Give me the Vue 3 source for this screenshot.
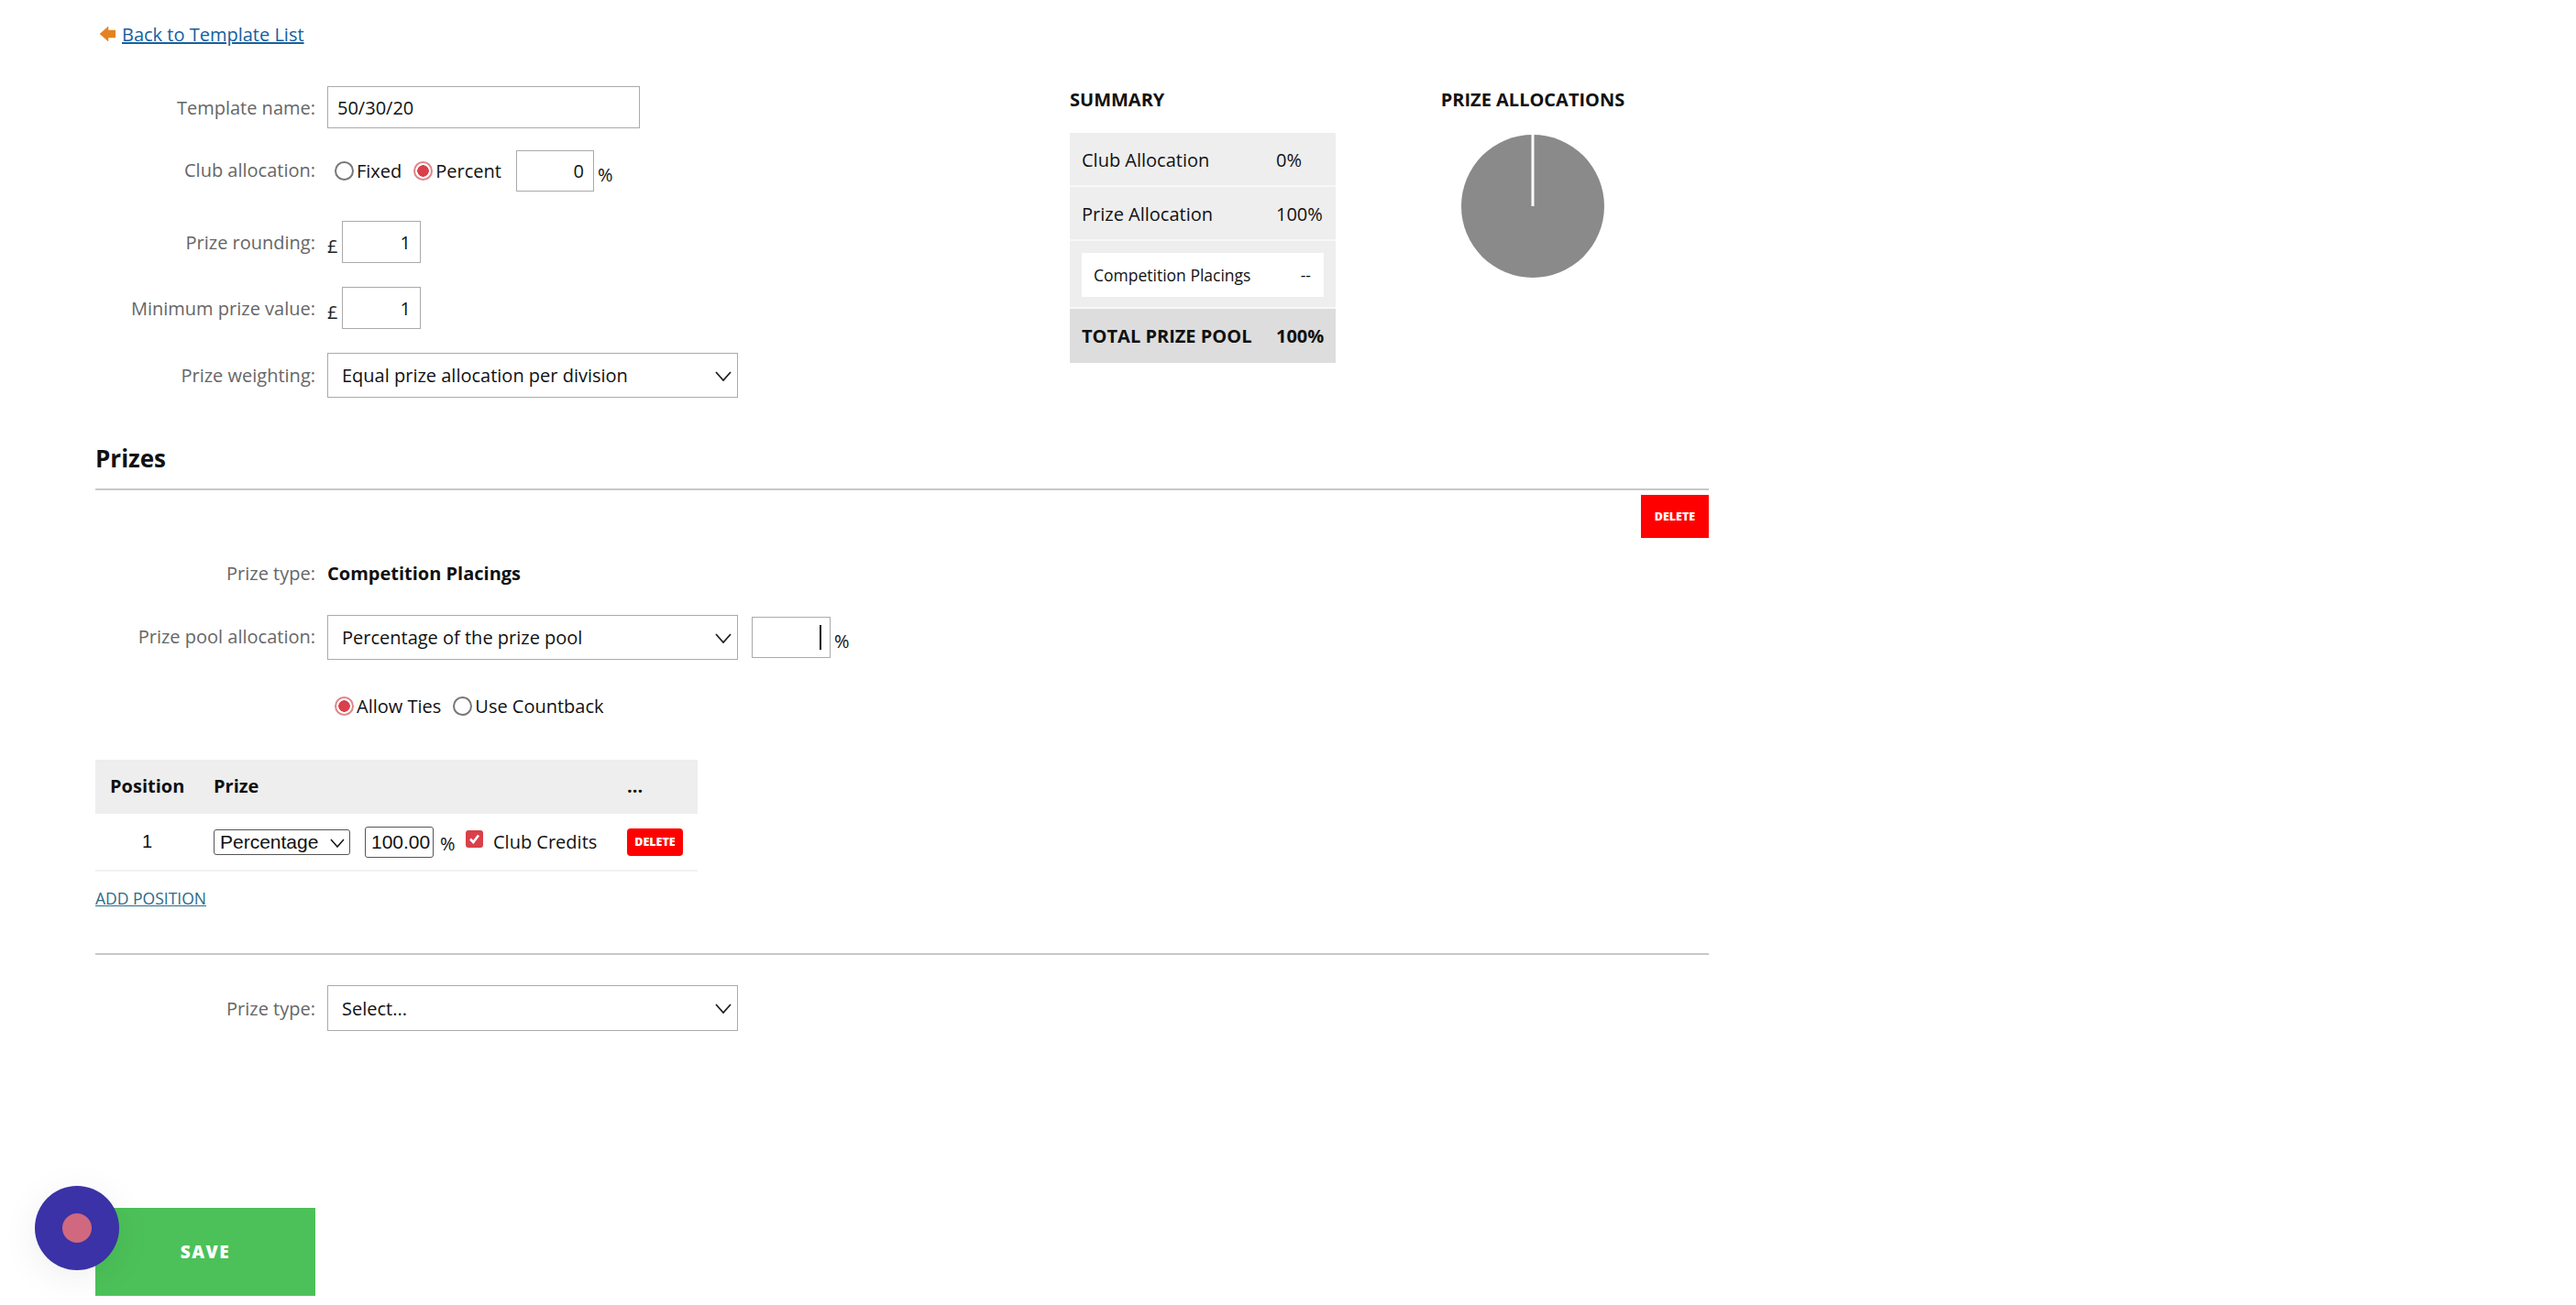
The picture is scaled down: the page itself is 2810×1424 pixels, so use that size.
<script setup>
import { ref } from 'vue'

const templateName = ref('50/30/20')
const clubMode = ref('percent')
const clubValue = ref('0')
const rounding = ref('1')
const minPrize = ref('1')
const tieMode = ref('ties')
const clubCredits = ref(true)

const summaryRows = [
  { label: 'Club Allocation', value: '0%' },
  { label: 'Prize Allocation', value: '100%' }
]
</script>

<template>
  <div class="page">
    <div class="back-row">
      <svg class="back-arrow" width="17" height="16" viewBox="0 0 17 16">
        <path d="M0 8 L9 0 L9 4 L17 4 L17 12 L9 12 L9 16 Z" fill="#e5821f" stroke="#e5821f" stroke-width="0.5" stroke-linejoin="round" />
      </svg>
      <a class="back-link" href="#">Back to Template List</a>
    </div>

    <div class="top">
      <div class="form">
        <div class="row">
          <label class="label">Template name:</label>
          <input v-model="templateName" class="text-input name-input" type="text" />
        </div>
        <div class="row row-club">
          <label class="label label-raised">Club allocation:</label>
          <div class="radios club-radios">
            <label class="radio"><input v-model="clubMode" type="radio" value="fixed" />Fixed</label>
            <label class="radio"><input v-model="clubMode" type="radio" value="percent" />Percent</label>
          </div>
          <input v-model="clubValue" class="text-input num-input club-input" type="text" />
          <span class="unit percent">%</span>
        </div>
        <div class="row row-rounding">
          <label class="label">Prize rounding:</label>
          <span class="unit pound">£</span>
          <input v-model="rounding" class="text-input num-input" type="text" />
        </div>
        <div class="row row-min">
          <label class="label">Minimum prize value:</label>
          <span class="unit pound">£</span>
          <input v-model="minPrize" class="text-input num-input" type="text" />
        </div>
        <div class="row row-min">
          <label class="label">Prize weighting:</label>
          <div class="select-wrap">
            <select class="select">
              <option>Equal prize allocation per division</option>
            </select>
            <svg class="chevron" width="18" height="11" viewBox="0 0 18 11">
              <path d="M1 1 L9 10 L17 1" fill="none" stroke="#222" stroke-width="1.8" />
            </svg>
          </div>
        </div>
      </div>

      <div class="summary">
        <h3 class="side-title">SUMMARY</h3>
        <div class="summary-box">
          <div v-for="item in summaryRows" :key="item.label" class="summary-row">
            <span class="summary-label">{{ item.label }}</span>
            <span>{{ item.value }}</span>
          </div>
          <div class="summary-nested">
            <div class="nested-card">
              <span>Competition Placings</span>
              <span>--</span>
            </div>
          </div>
          <div class="summary-row summary-total">
            <span class="summary-label">TOTAL PRIZE POOL</span>
            <span>100%</span>
          </div>
        </div>
      </div>

      <div class="allocations">
        <h3 class="side-title">PRIZE ALLOCATIONS</h3>
        <svg class="pie" width="156" height="156" viewBox="0 0 156 156">
          <circle cx="78" cy="78" r="78" fill="#8a8a8a" />
          <rect x="76.5" y="0" width="3" height="78" fill="#fff" />
        </svg>
      </div>
    </div>

    <h2 class="section-title">Prizes</h2>
    <div class="delete-row">
      <button class="delete-btn">DELETE</button>
    </div>

    <div class="row row-type">
      <label class="label">Prize type:</label>
      <strong class="type-name">Competition Placings</strong>
    </div>
    <div class="row row-pool">
      <label class="label label-raised">Prize pool allocation:</label>
      <div class="select-wrap">
        <select class="select">
          <option>Percentage of the prize pool</option>
        </select>
        <svg class="chevron" width="18" height="11" viewBox="0 0 18 11">
          <path d="M1 1 L9 10 L17 1" fill="none" stroke="#222" stroke-width="1.8" />
        </svg>
      </div>
      <div class="pool-input">
        <input class="text-input num-input" type="text" />
        <span class="caret"></span>
      </div>
      <span class="unit percent">%</span>
    </div>
    <div class="row row-ties">
      <span class="label"></span>
      <div class="radios ties-radios">
        <label class="radio"><input v-model="tieMode" type="radio" value="ties" />Allow Ties</label>
        <label class="radio"><input v-model="tieMode" type="radio" value="countback" />Use Countback</label>
      </div>
    </div>

    <table class="positions">
      <thead>
        <tr>
          <th class="col-position">Position</th>
          <th class="col-prize">Prize</th>
          <th class="col-more">...</th>
        </tr>
      </thead>
      <tbody>
        <tr>
          <td class="cell-position">1</td>
          <td>
            <div class="prize-cell">
              <div class="mini-select-wrap">
                <select class="mini-select">
                  <option>Percentage</option>
                </select>
                <svg class="mini-chevron" width="16" height="10" viewBox="0 0 16 10">
                  <path d="M1 1 L8 9 L15 1" fill="none" stroke="#111" stroke-width="1.5" />
                </svg>
              </div>
              <input class="mini-input" type="text" value="100.00" />
              <span class="mini-unit">%</span>
              <div class="credits-box">
                <input v-model="clubCredits" class="credits-check" type="checkbox" />
                <svg class="credits-tick" width="19" height="19" viewBox="0 0 19 19">
                  <path d="M5 9.5 L8.3 13 L14 5.5" fill="none" stroke="#fff" stroke-width="2.6" />
                </svg>
              </div>
              <span class="credits-label">Club Credits</span>
            </div>
          </td>
          <td>
            <button class="delete-btn delete-small">DELETE</button>
          </td>
        </tr>
      </tbody>
    </table>

    <a class="add-position" href="#">ADD POSITION</a>
    <hr class="divider" />

    <div class="row row-select-type">
      <label class="label">Prize type:</label>
      <div class="select-wrap">
        <select class="select select-tall">
          <option>Select...</option>
        </select>
        <svg class="chevron" width="18" height="11" viewBox="0 0 18 11">
          <path d="M1 1 L9 10 L17 1" fill="none" stroke="#222" stroke-width="1.8" />
        </svg>
      </div>
    </div>

    <button class="save-btn">SAVE</button>

    <div class="floating-widget">
      <span class="floating-dot"></span>
    </div>
  </div>
</template>

<style scoped>
.page {
  box-sizing: border-box;
  width: 1864px;
  height: 1424px;
  padding: 22px 0 0 104px;
  font-family: "Open Sans", "Liberation Sans", sans-serif;
  font-size: 20px;
  color: #111;
  overflow: hidden;
}

.back-row {
  display: flex;
  align-items: center;
  height: 30px;
  padding-left: 5px;
}

.back-arrow {
  margin-right: 7px;
}

.back-link {
  color: #14609f;
  text-decoration: underline;
}

.top {
  display: flex;
  margin-top: 42px;
}

.form {
  width: 1063px;
  flex-shrink: 0;
}

.row {
  display: flex;
  align-items: center;
}

.row-club {
  margin-top: 24px;
}

.row-rounding {
  margin-top: 32px;
}

.row-min {
  margin-top: 26px;
}

.label {
  width: 240px;
  margin-right: 13px;
  text-align: right;
  color: #666;
  flex-shrink: 0;
}

.label-raised {
  margin-bottom: 3px;
}

.text-input {
  box-sizing: border-box;
  height: 46px;
  border: 1px solid #aaa;
  background: #fff;
  padding: 0 10px;
  font: inherit;
  color: #111;
  outline: none;
}

.name-input {
  width: 341px;
}

.num-input {
  width: 86px;
  text-align: right;
  padding-right: 10px;
}

.radios {
  display: flex;
}

.radio {
  display: flex;
  align-items: center;
  color: #111;
}

.radio input {
  appearance: none;
  box-sizing: border-box;
  width: 21px;
  height: 21px;
  margin: 0 3px 0 0;
  border: 2px solid #777;
  border-radius: 50%;
  background: #fff;
}

.radio input:checked {
  border-color: #e0858b;
  background: radial-gradient(circle, #d9404a 0 6px, #fff 6.5px);
}

.club-radios {
  margin-left: 8px;
  gap: 13px;
}

.club-input {
  margin-left: 16px;
  width: 85px;
  height: 45px;
}

.unit {
  margin-top: 8px;
}

.percent {
  margin-left: 4px;
}

.pound {
  width: 16px;
  color: #222;
}

.select-wrap {
  position: relative;
  width: 448px;
}

.select {
  display: block;
  box-sizing: border-box;
  appearance: none;
  width: 100%;
  height: 49px;
  border: 1px solid #aaa;
  border-radius: 0;
  background: #fff;
  padding: 0 15px;
  font: inherit;
  color: #111;
}

.select-tall {
  height: 50px;
}

.chevron {
  position: absolute;
  right: 7px;
  top: 20px;
  pointer-events: none;
}

.summary {
  width: 290px;
  flex-shrink: 0;
}

.side-title {
  margin: 0;
  font-size: 20px;
  line-height: 30px;
  font-weight: 700;
  color: #111;
  white-space: nowrap;
}

.summary-box {
  margin-top: 21px;
  background: #eee;
}

.summary-row {
  box-sizing: border-box;
  display: flex;
  align-items: center;
  height: 59px;
  padding: 2px 0 0 13px;
  border-bottom: 2px solid #f8f8f8;
}

.summary-label {
  width: 212px;
}

.summary-nested {
  padding: 13px 13px 11px;
  border-bottom: 2px solid #f8f8f8;
}

.nested-card {
  display: flex;
  justify-content: space-between;
  align-items: center;
  height: 48px;
  padding: 0 14px 0 13px;
  background: #fff;
  font-size: 17.5px;
}

.summary-total {
  height: 59px;
  padding-top: 0;
  background: #ddd;
  border-bottom: 0;
  font-weight: 700;
}

.allocations {
  width: 200px;
  margin-left: 115px;
  flex-shrink: 0;
  display: flex;
  flex-direction: column;
  align-items: center;
}

.pie {
  margin-top: 23px;
}

.section-title {
  box-sizing: content-box;
  margin: 50px 0 0;
  width: 1760px;
  height: 32px;
  padding-bottom: 17px;
  border-bottom: 2px solid #c8c8c8;
  font-size: 26px;
  line-height: 32px;
  font-weight: 700;
}

.delete-row {
  display: flex;
  justify-content: flex-end;
  width: 1760px;
  margin-top: 5px;
}

.delete-btn {
  width: 74px;
  height: 47px;
  border: 0;
  padding: 0;
  background: #f00;
  color: #fff;
  font-family: inherit;
  font-size: 12.5px;
  font-weight: 800;
}

.row-type {
  height: 30px;
  margin-top: 23px;
}

.type-name {
  font-weight: 700;
}

.row-pool {
  margin-top: 31px;
}

.pool-input {
  position: relative;
  margin-left: 15px;
  height: 45px;
}

.pool-input .text-input {
  height: 45px;
}

.caret {
  position: absolute;
  left: 74px;
  top: 9px;
  width: 2px;
  height: 27px;
  background: #111;
}

.row-ties {
  height: 30px;
  margin-top: 35px;
}

.ties-radios {
  margin-left: 8px;
  gap: 13px;
}

.positions {
  width: 657px;
  margin-top: 44px;
  border-collapse: collapse;
  table-layout: fixed;
}

.positions th {
  height: 57px;
  padding: 0 0 2px;
  background: #eee;
  text-align: left;
  font-weight: 700;
}

.col-position {
  width: 129px;
  box-sizing: border-box;
  padding-left: 16px !important;
}

.col-more {
  width: 77px;
}

.col-prize {
  width: 451px;
}

.positions td {
  height: 61px;
  padding: 0;
  border-bottom: 2px solid #f2f2f2;
}

.positions td.cell-position {
  padding-right: 16px;
  text-align: center;
  font-family: "Liberation Sans", Arial, sans-serif;
}

.prize-cell {
  display: flex;
  align-items: center;
}

.mini-select-wrap {
  position: relative;
  width: 149px;
}

.mini-select {
  display: block;
  box-sizing: border-box;
  appearance: none;
  width: 100%;
  height: 28px;
  border: 1px solid #555;
  border-radius: 3px;
  background: #fff;
  padding: 0 6px;
  font-family: "Liberation Sans", Arial, sans-serif;
  font-size: 21px;
  color: #111;
}

.mini-chevron {
  position: absolute;
  right: 6px;
  top: 10px;
  pointer-events: none;
}

.mini-input {
  box-sizing: border-box;
  width: 75px;
  height: 34px;
  margin-left: 16px;
  border: 1px solid #555;
  border-radius: 3px;
  padding: 0 2px 0 6px;
  font-family: "Liberation Sans", Arial, sans-serif;
  font-size: 21px;
  color: #111;
}

.mini-unit {
  width: 16px;
  margin: 4px 0 0 7px;
}

.credits-box {
  position: relative;
  width: 19px;
  height: 19px;
  margin: -7px 0 0 12px;
}

.credits-check {
  appearance: none;
  display: block;
  width: 19px;
  height: 19px;
  margin: 0;
  border-radius: 3px;
  background: #fff;
}

.credits-check:checked {
  background: #d9404a;
}

.credits-tick {
  position: absolute;
  left: 0;
  top: 0;
  pointer-events: none;
}

.credits-label {
  margin-left: 11px;
  color: #111;
}

.delete-small {
  display: block;
  width: 61px;
  height: 30px;
  border-radius: 4px;
}

.add-position {
  display: block;
  width: fit-content;
  margin-top: 17px;
  font-size: 17.5px;
  line-height: 24px;
  color: #2c6a8a;
  text-decoration: underline;
}

.divider {
  width: 1760px;
  height: 2px;
  margin: 48px 0 0;
  border: 0;
  background: #c8c8c8;
}

.row-select-type {
  margin-top: 33px;
}

.save-btn {
  display: block;
  width: 240px;
  height: 96px;
  margin-top: 193px;
  border: 0;
  padding: 0;
  background: #4cc159;
  color: #fff;
  font-family: "Open Sans", sans-serif;
  font-size: 19px;
  font-weight: 800;
  letter-spacing: 1.5px;
}

.floating-widget {
  position: fixed;
  left: 38px;
  bottom: 38px;
  width: 92px;
  height: 92px;
  display: flex;
  align-items: center;
  justify-content: center;
  border-radius: 50%;
  background: #3a32a6;
  box-shadow: 0 8px 40px rgba(0, 0, 0, 0.07);
}

.floating-dot {
  width: 32px;
  height: 32px;
  border-radius: 50%;
  background: #d0687f;
}
</style>

<style>
html,
body {
  background: #fff;
}
</style>
